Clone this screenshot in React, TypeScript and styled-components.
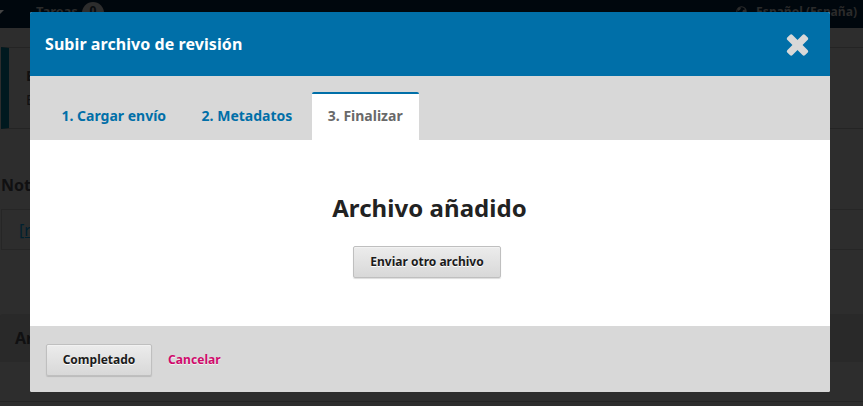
import React from 'react';
import styled, { createGlobalStyle } from 'styled-components';

const GlobalStyle = createGlobalStyle`
  * { box-sizing: border-box; }
  html, body { margin: 0; height: 100%; overflow: hidden; background: #2d2d2d; }
  body { font-family: "Noto Sans", sans-serif; font-size: 14px; line-height: 20px; color: #101011; }
  button { font-family: inherit; cursor: pointer; }
  a { text-decoration: none; }
`;

const Page = styled.div`
  position: relative;
  width: 863px;
  height: 406px;
  overflow: hidden;
  background: #2d2d2d;
`;

const NavBar = styled.header`
  display: flex;
  align-items: flex-start;
  height: 28px;
  background: #00070d;
  color: #2b2b2b;
  font-size: 13px;
  font-weight: 700;
  line-height: 23px;
  white-space: nowrap;
`;

const Caret = styled.svg`
  display: block;
  width: 4px;
  height: 4px;
  margin: 10px 32px 0 0;
`;

const Tasks = styled.span`
  width: 40px;
`;

const Badge = styled.span`
  width: 22px;
  height: 22px;
  margin: 2px 0 0 6px;
  border-radius: 50%;
  background: #2d2d2d;
  color: #080b0e;
  font-size: 12px;
  line-height: 18px;
  text-align: center;
`;

const Language = styled.div`
  display: flex;
  margin: 0 6px 0 auto;
  gap: 9px;
  font-size: 12.1px;
`;

const Globe = styled.svg`
  display: block;
  width: 11px;
  height: 11px;
  margin-top: 6px;
`;

const Notice = styled.section`
  height: 82px;
  margin: 19px 0 0 1px;
  padding: 16px 17px;
  border: solid #242424;
  border-width: 1px 0;
  border-left: 8px solid #00191f;
  line-height: 24px;
`;

const NoticeTitle = styled.strong`
  display: block;
`;

const NotificationsTitle = styled.h3`
  margin: 46px 0 0 1px;
  font-size: 16px;
  line-height: 20px;
`;

const NotificationRow = styled.div`
  height: 41px;
  margin: 14px 0 64px 1px;
  padding: 10px 17px;
  border: 1px solid #262626;
  border-right: 0;
  font-size: 16px;
`;

const NotificationLink = styled.a`
  color: #00202f;
  text-decoration: underline;
`;

const FilesPanel = styled.section`
  height: 88px;
  border-bottom: 1px solid #242424;
`;

const FilesHeader = styled.header`
  height: 48px;
  padding: 14px 15px;
  border-radius: 3px 0 0;
  background: #292929;
  font-size: 16px;
  font-weight: 700;
`;

const Modal = styled.section`
  position: absolute;
  top: 12px;
  left: 30px;
  display: flex;
  flex-direction: column;
  width: 800px;
  height: 380px;
  overflow: hidden;
  border-radius: 2px;
  background: #fff;
`;

const ModalHeader = styled.header`
  display: flex;
  flex: 0 0 64px;
  align-items: center;
  justify-content: space-between;
  padding: 0 21px 0 15px;
  background: #006fa8;
`;

const ModalTitle = styled.h2`
  margin: 0;
  color: #fff;
  font-size: 16px;
  line-height: 24px;
  letter-spacing: 0.07px;
`;

const CloseButton = styled.button`
  display: flex;
  margin: 1px 0 0;
  padding: 0;
  border: 0;
  background: none;
`;

const Tabs = styled.nav`
  display: flex;
  flex: 0 0 64px;
  align-items: flex-end;
  gap: 3.5px;
  padding-left: 15.5px;
  background: #d8d8d8;
`;

const Tab = styled.a<{ $active?: boolean }>`
  height: 48px;
  padding: 0 16px;
  border-top: 2px solid ${p => (p.$active ? '#006fa8' : 'transparent')};
  border-radius: 2px 2px 0 0;
  background: ${p => (p.$active ? '#fff' : 'transparent')};
  color: ${p => (p.$active ? '#696969' : '#006fa8')};
  font-size: 14px;
  font-weight: 700;
  line-height: 43px;
  white-space: nowrap;
`;

const Content = styled.main`
  display: flex;
  flex: 1;
  flex-direction: column;
  align-items: center;
  padding: 52px 1px 0 0;
`;

const Heading = styled.h1`
  margin: 0 0 22px;
  color: #222;
  font-size: 24px;
  line-height: 32px;
  letter-spacing: 0.05px;
`;

const Button = styled.button<{ $width: number }>`
  width: ${p => p.$width}px;
  height: 32px;
  padding: 0;
  border: 1px solid #bfbfbf;
  border-radius: 2px;
  background: linear-gradient(#ececec, #d8d8d8);
  box-shadow: inset 0 1px 0 #f2f2f2, 0 1px 1px rgba(0, 0, 0, 0.14);
  color: #1b1b1b;
  font-size: 12px;
  font-weight: 700;
  line-height: 28px;
  text-shadow: 0 1px 0 #fff;
  white-space: nowrap;
`;

const AnotherFile = styled.div`
  padding-right: 5px;
`;

const Footer = styled.footer`
  display: flex;
  flex: 0 0 66px;
  align-items: flex-start;
  gap: 16px;
  padding: 18px 16px 0;
  background: #d8d8d8;
`;

const Cancel = styled.a`
  color: #d00a6c;
  font-size: 12px;
  font-weight: 700;
  line-height: 31px;
  letter-spacing: 0.07px;
  text-shadow: 0 1px 0 #f3f3f3;
`;

export default function App() {
  return (
    <Page>
      <GlobalStyle />
      <NavBar>
        <Caret viewBox="0 0 4 4"><path d="M0 0h4L0 4z" fill="#444" /></Caret>
        <Tasks>Tareas</Tasks>
        <Badge>0</Badge>
        <Language>
          <Globe viewBox="0 0 11 11">
            <circle cx="5.5" cy="5.5" r="4.7" fill="none" stroke="#2b2b2b" strokeWidth="1.1" />
            <path d="M2 2l2-1 1 1-1 2-2 1zm5 2l3-1v3L7 9 6 7z" fill="#2b2b2b" />
          </Globe>
          <span>Español (España)</span>
        </Language>
      </NavBar>
      <Notice>
        <NoticeTitle>El archivo</NoticeTitle>
        <span>El archivo</span>
      </Notice>
      <NotificationsTitle>Notificaciones</NotificationsTitle>
      <NotificationRow><NotificationLink href="#">[revista]</NotificationLink></NotificationRow>
      <FilesPanel><FilesHeader>Archivos</FilesHeader></FilesPanel>
      <Modal role="dialog">
        <ModalHeader>
          <ModalTitle>Subir archivo de revisión</ModalTitle>
          <CloseButton aria-label="Cerrar">
            <svg width="23" height="22" viewBox="0 0 23 22">
              <g fill="#d8d8d8" transform="rotate(45 11.5 11)">
                <rect x="-1" y="7.4" width="25" height="7.2" rx="1.9" />
                <rect x="7.9" y="-1.5" width="7.2" height="25" rx="1.9" />
              </g>
            </svg>
          </CloseButton>
        </ModalHeader>
        <Tabs>
          <Tab href="#">1. Cargar envío</Tab>
          <Tab href="#">2. Metadatos</Tab>
          <Tab href="#" $active>3. Finalizar</Tab>
        </Tabs>
        <Content>
          <Heading>Archivo añadido</Heading>
          <AnotherFile><Button $width={148}>Enviar otro archivo</Button></AnotherFile>
        </Content>
        <Footer>
          <Button $width={106}>Completado</Button>
          <Cancel href="#">Cancelar</Cancel>
        </Footer>
      </Modal>
    </Page>
  );
}
